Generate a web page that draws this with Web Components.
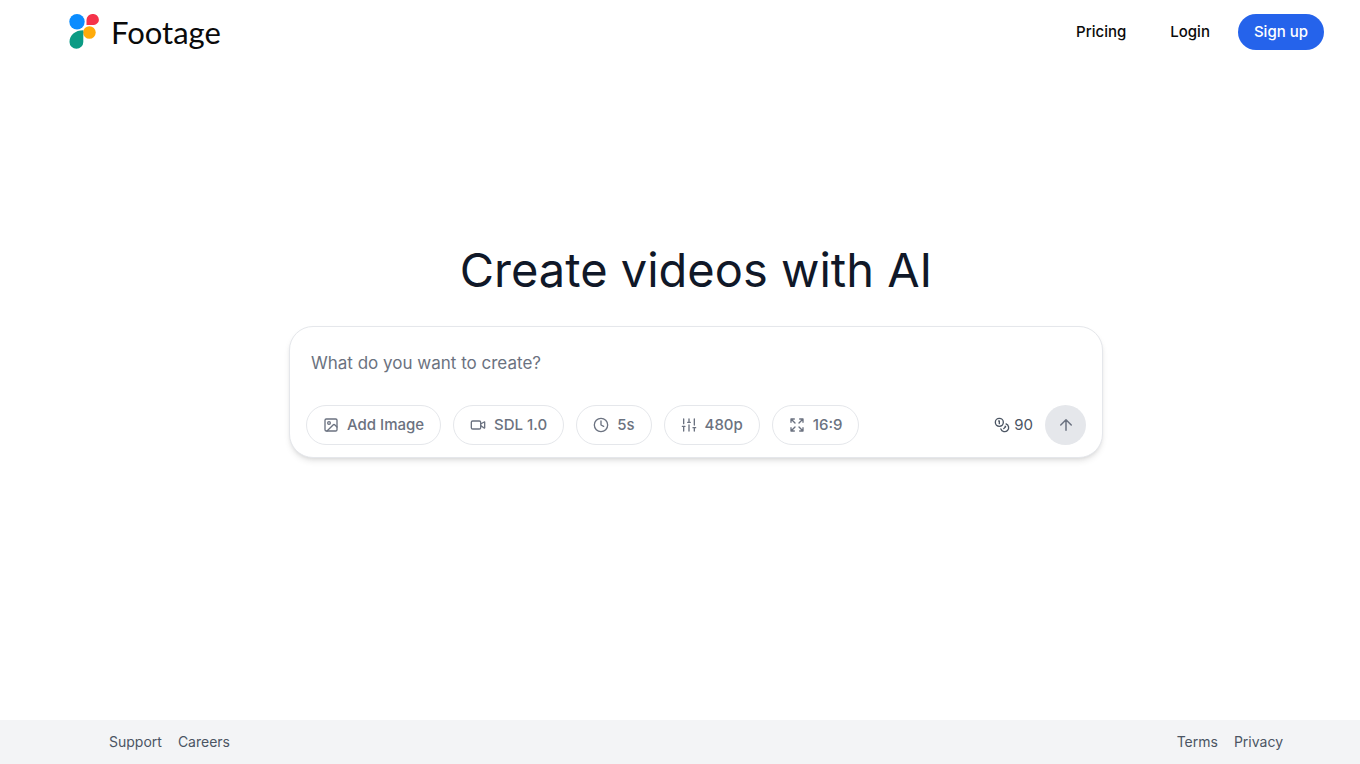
<!DOCTYPE html>
<html lang="en">
<head>
<meta charset="utf-8">
<meta name="viewport" content="width=device-width, initial-scale=1">
<title>Footage</title>
<style>
  body {
    margin: 0;
    background: #fff;
    color: #101828;
    font-family: Inter, "Liberation Sans", sans-serif;
    font-size: 15px;
    line-height: 20px;
  }
</style>
</head>
<body>
<footage-app>
  <footage-header slot="header">
    <nav-link href="#pricing">Pricing</nav-link>
    <nav-link href="#login">Login</nav-link>
    <nav-link href="#signup" primary>Sign up</nav-link>
  </footage-header>
  <prompt-card placeholder="What do you want to create?" credits="90">
    <option-pill icon="image">Add Image</option-pill>
    <option-pill icon="video">SDL 1.0</option-pill>
    <option-pill icon="clock">5s</option-pill>
    <option-pill icon="sliders">480p</option-pill>
    <option-pill icon="expand">16:9</option-pill>
  </prompt-card>
  <footage-footer slot="footer">
    <footer-link href="#support">Support</footer-link>
    <footer-link href="#careers">Careers</footer-link>
    <footer-link slot="legal" href="#terms">Terms</footer-link>
    <footer-link slot="legal" href="#privacy">Privacy</footer-link>
  </footage-footer>
</footage-app>

<script>
const ICONS = {
  image: '<rect x="3" y="3" width="18" height="18" rx="2"/><circle cx="9" cy="9" r="2"/><path d="m21 15-3.086-3.086a2 2 0 0 0-2.828 0L6 21"/>',
  video: '<path d="m16 13 5.200 3.500a.5.5 0 0 0 .8-.4V7.900a.5.5 0 0 0-.8-.4L16 10.500"/><rect x="2" y="6" width="14" height="12" rx="2"/>',
  clock: '<circle cx="12" cy="12" r="10"/><path d="M12 6v6l4 2"/>',
  sliders: '<path d="M4 21v-7M4 10V3M12 21v-9M12 8V3M20 21v-5M20 12V3M2 14h4M10 8h4M18 16h4"/>',
  expand: '<path d="m15 15 6 6M15 9l6-6M21 16v5h-5M21 8V3h-5M3 16v5h5M3 21l6-6M3 8V3h5M9 9 3 3"/>',
  coins: '<circle cx="8" cy="8" r="6"/><path d="M18.090 10.370A6 6 0 1 1 10.340 18M7 6h1v4M16.710 13.880l.7.71-2.820 2.820"/>',
  arrow: '<path d="m5 12 7-7 7 7M12 19V5"/>'
};

class BaseElement extends HTMLElement {
  constructor() {
    super();
    this.attachShadow({ mode: 'open' });
  }

  connectedCallback() {
    if (!this.rendered) {
      this.shadowRoot.innerHTML = this.template();
      this.rendered = true;
    }
  }
}

class AppIcon extends BaseElement {
  template() {
    return `
      <style>
        :host { display: block; width: 16px; height: 16px; flex: none; }
        :host([size="large"]) { width: 18px; height: 18px; }
        svg { display: block; width: 100%; height: 100%; }
      </style>
      <svg viewBox="0 0 24 24" fill="none" stroke="currentColor" stroke-width="2" stroke-linecap="round" stroke-linejoin="round" aria-hidden="true">${ICONS[this.getAttribute('name')]}</svg>
    `;
  }
}

class FootageLogo extends BaseElement {
  template() {
    return `
      <style>
        :host { display: block; }
        a { display: flex; align-items: center; gap: 12px; color: #0a0a0a; text-decoration: none; }
        svg { display: block; width: 30px; height: 36px; }
        span { font: 400 31px/40px Lato, Inter, sans-serif; }
      </style>
      <a href="#home">
        <svg viewBox="0 0 30 36" aria-hidden="true">
          <circle cx="8" cy="7.800" r="7.700" fill="#0a8cff"/>
          <path d="M17.500 11V6.200A6 6 0 0 1 23.700 0 5.800 5.800 0 0 1 29.900 5.700c0 3.200-2.800 5.300-6.300 5.300z" fill="#f5334a"/>
          <circle cx="20.400" cy="18.500" r="6.300" fill="#ffab0a"/>
          <path d="M14.300 16.300v11.600a6.900 6.900 0 0 1-13.800 0c0-6.800 5.700-11.600 13.800-11.600z" fill="#0b9b84"/>
        </svg>
        <span>Footage</span>
      </a>
    `;
  }
}

class NavLink extends BaseElement {
  template() {
    return `
      <style>
        :host { display: block; }
        a {
          display: block;
          padding: 8px 16px;
          border-radius: 18px;
          color: #0a0a0a;
          font-weight: 500;
          text-decoration: none;
        }
        :host([primary]) a { background: #2563eb; color: #fff; }
      </style>
      <a href="${this.getAttribute('href')}"><slot></slot></a>
    `;
  }
}

class FootageHeader extends BaseElement {
  template() {
    return `
      <style>
        :host { display: block; }
        header {
          display: flex;
          align-items: center;
          justify-content: space-between;
          padding: 12px 36px 12px 69px;
        }
        nav { display: flex; gap: 12px; }
      </style>
      <header>
        <footage-logo></footage-logo>
        <nav><slot></slot></nav>
      </header>
    `;
  }
}

class OptionPill extends BaseElement {
  template() {
    return `
      <style>
        :host { display: block; }
        button {
          display: flex;
          align-items: center;
          gap: 8px;
          height: 40px;
          padding: 0 16px;
          border: 1px solid #e5e7eb;
          border-radius: 20px;
          background: #fff;
          color: #6b7280;
          font: inherit;
          font-weight: 500;
        }
      </style>
      <button type="button"><app-icon name="${this.getAttribute('icon')}"></app-icon><slot></slot></button>
    `;
  }
}

class PromptCard extends BaseElement {
  template() {
    return `
      <style>
        :host { display: block; }
        form {
          padding: 16px 16px 12px;
          border: 1px solid #e5e7eb;
          border-radius: 24px;
          background: #fff;
          box-shadow: 0 4px 6px -1px rgba(0, 0, 0, .1), 0 2px 4px -2px rgba(0, 0, 0, .1);
        }
        textarea {
          display: block;
          width: 100%;
          height: 62px;
          padding: 8px 5px;
          border: 0;
          outline: 0;
          resize: none;
          box-sizing: border-box;
          background: transparent;
          color: #101828;
          font: inherit;
          font-size: 17px;
          line-height: 24px;
        }
        textarea::placeholder { color: #6b7280; opacity: 1; }
        .row, .options, .submit, .credits { display: flex; align-items: center; }
        .row { justify-content: space-between; }
        .options, .submit { gap: 12px; }
        .credits { gap: 4px; color: #4b5563; }
        button {
          display: grid;
          place-items: center;
          width: 41px;
          height: 40px;
          padding: 0;
          border: 0;
          border-radius: 50%;
          background: #e5e7eb;
          color: #6b7280;
        }
      </style>
      <form>
        <textarea aria-label="Prompt" placeholder="${this.getAttribute('placeholder')}"></textarea>
        <div class="row">
          <div class="options"><slot></slot></div>
          <div class="submit">
            <div class="credits"><app-icon name="coins"></app-icon><span>${this.getAttribute('credits')}</span></div>
            <button type="button" aria-label="Create"><app-icon name="arrow" size="large"></app-icon></button>
          </div>
        </div>
      </form>
    `;
  }
}

class FooterLink extends BaseElement {
  template() {
    return `
      <style>
        :host { display: block; font-size: 14px; }
        a { color: #4b5563; text-decoration: none; }
      </style>
      <a href="${this.getAttribute('href')}"><slot></slot></a>
    `;
  }
}

class FootageFooter extends BaseElement {
  template() {
    return `
      <style>
        :host { display: block; }
        footer { padding: 12px 32px 12px 64px; background: #f3f4f6; }
        .inner {
          display: flex;
          justify-content: space-between;
          max-width: 1174px;
          margin: 0 auto;
        }
        nav { display: flex; gap: 16px; }
      </style>
      <footer>
        <div class="inner">
          <nav aria-label="Company"><slot></slot></nav>
          <nav aria-label="Legal"><slot name="legal"></slot></nav>
        </div>
      </footer>
    `;
  }
}

class FootageApp extends BaseElement {
  template() {
    return `
      <style>
        :host { display: flex; flex-direction: column; min-height: 100vh; }
        main {
          flex: 1;
          display: flex;
          flex-direction: column;
          align-items: center;
          justify-content: center;
          padding: 0 32px 80px 64px;
        }
        h1 {
          margin: 0 0 32px;
          font-size: 47px;
          font-weight: 400;
          line-height: 48px;
          text-align: center;
        }
        .content { width: 100%; max-width: 814px; }
      </style>
      <slot name="header"></slot>
      <main>
        <div class="content">
          <h1>Create videos with AI</h1>
          <slot></slot>
        </div>
      </main>
      <slot name="footer"></slot>
    `;
  }
}

customElements.define('app-icon', AppIcon);
customElements.define('footage-logo', FootageLogo);
customElements.define('nav-link', NavLink);
customElements.define('footage-header', FootageHeader);
customElements.define('option-pill', OptionPill);
customElements.define('prompt-card', PromptCard);
customElements.define('footer-link', FooterLink);
customElements.define('footage-footer', FootageFooter);
customElements.define('footage-app', FootageApp);
</script>
</body>
</html>
